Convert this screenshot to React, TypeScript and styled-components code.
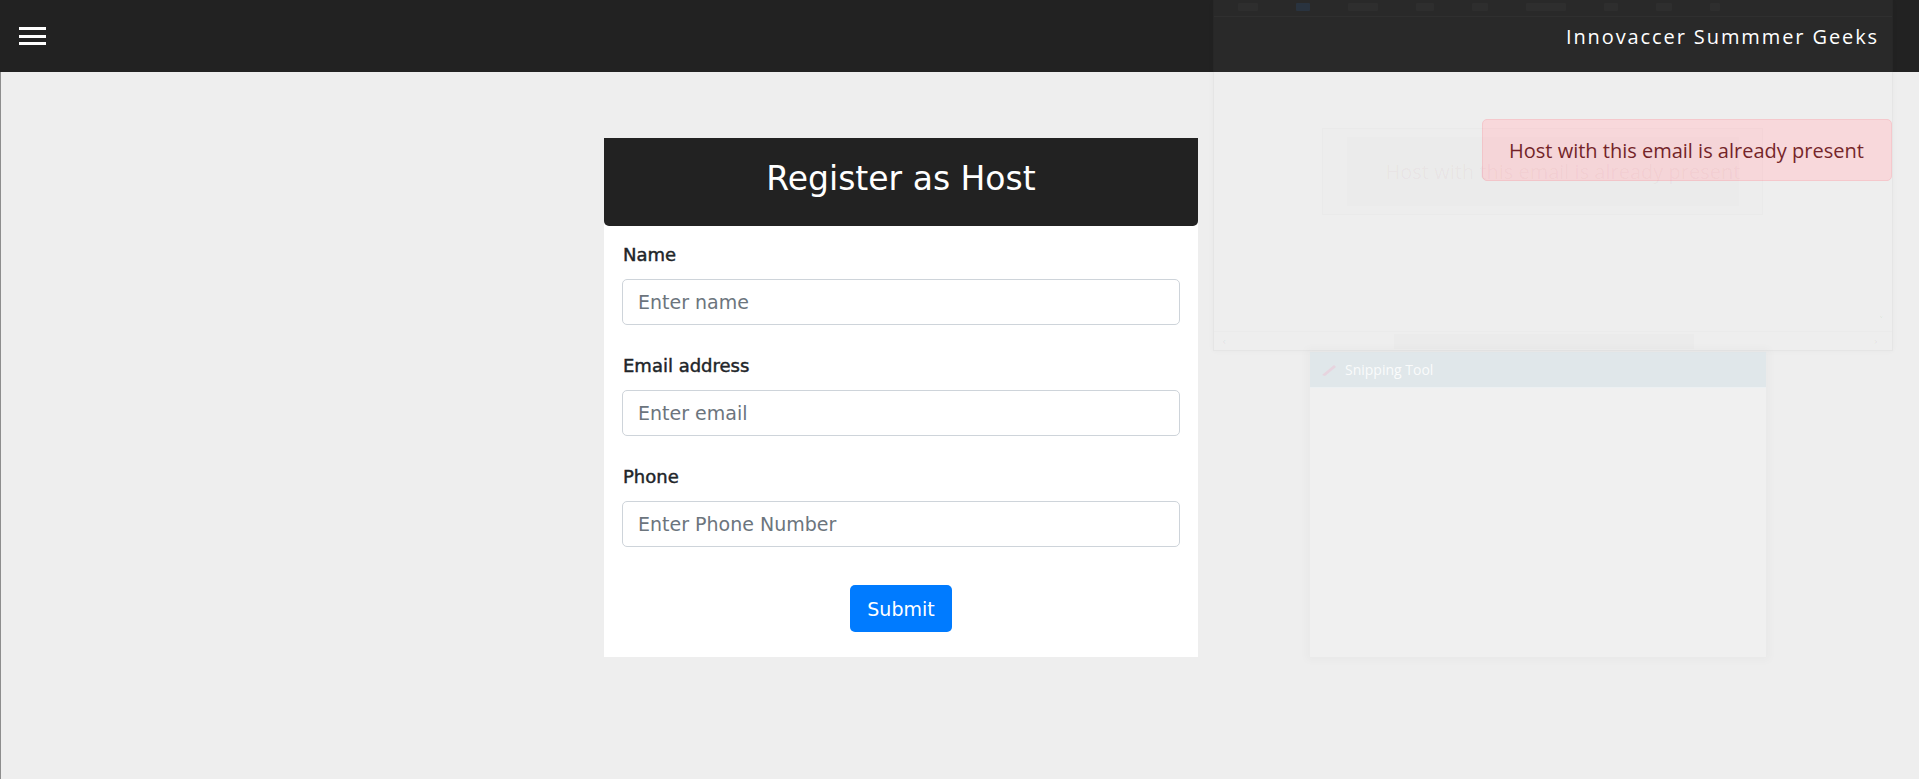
import React from "react";
import styled, { createGlobalStyle } from "styled-components";

const GlobalStyle = createGlobalStyle`
  html, body { margin: 0; padding: 0; }
  body {
    background: #eeeeee;
    font-family: "DejaVu Sans", "Noto Sans", sans-serif;
    overflow: hidden;
  }
  * { box-sizing: border-box; }
`;

const Page = styled.div`
  position: relative;
  min-height: 779px;
  display: flex;
  flex-direction: column;
`;

const NavBar = styled.header`
  height: 72px;
  flex-shrink: 0;
  background: #222222;
  display: flex;
  align-items: center;
  justify-content: space-between;
  padding: 0 40px 0 19px;
`;

const MenuButton = styled.button`
  background: none;
  border: 0;
  padding: 0;
  width: 27px;
  height: 18px;
  display: flex;
  flex-direction: column;
  justify-content: space-between;
  cursor: pointer;
`;

const MenuBar = styled.span`
  display: block;
  height: 3px;
  background: #ffffff;
`;

const Brand = styled.span`
  font-family: "Open Sans", sans-serif;
  font-size: 20px;
  letter-spacing: 1.9px;
  color: #ffffff;
`;

const Main = styled.main`
  flex: 1;
  min-height: 707px;
  border-left: 1px solid #8d8d8d;
  padding: 66px 0 0 603px;
  display: flex;
  align-items: flex-start;
`;

const Card = styled.section`
  width: 594px;
  background: #ffffff;
`;

const CardHeader = styled.h2`
  margin: 0;
  height: 88px;
  background: #222222;
  border-radius: 0 0 5px 5px;
  color: #ffffff;
  font-weight: 400;
  font-size: 33px;
  display: flex;
  align-items: center;
  justify-content: center;
  padding-bottom: 8px;
`;

const Form = styled.form`
  padding: 15px 18px 25px;
  display: flex;
  flex-direction: column;
`;

const Group = styled.div`
  display: flex;
  flex-direction: column;
  margin-bottom: 27px;
`;

const Label = styled.label`
  font-size: 18px;
  line-height: 27px;
  color: #212529;
  margin-bottom: 11px;
  padding-left: 1px;
  -webkit-text-stroke: 0.45px #212529;
`;

const Input = styled.input`
  height: 46px;
  border: 1px solid #ced4da;
  border-radius: 5px;
  padding: 0 15px;
  font-family: inherit;
  font-size: 19px;
  color: #495057;
  background: #ffffff;
  outline: none;
  &::placeholder {
    color: #6c757d;
  }
`;

const Actions = styled.div`
  display: flex;
  justify-content: center;
  margin-top: 11px;
`;

const SubmitButton = styled.button`
  height: 47px;
  padding: 0 17px;
  border: 0;
  border-radius: 5px;
  background: #007bff;
  color: #ffffff;
  font-family: inherit;
  font-size: 19px;
  cursor: pointer;
`;

const Alert = styled.div`
  position: absolute;
  left: 1482px;
  top: 119px;
  width: 410px;
  height: 62px;
  display: flex;
  align-items: center;
  padding-left: 26px;
  background: #f8d7da;
  border: 1px solid #f5c6cb;
  border-radius: 5px;
  color: #721c24;
  font-family: "Open Sans", sans-serif;
  font-size: 20px;
`;

/* faint ghost of a captured window lying over the page */
const GhostLayer = styled.div`
  position: absolute;
  inset: 0;
  pointer-events: none;
`;

const GhostWindow = styled.div`
  position: absolute;
  left: 1213px;
  top: 0;
  width: 680px;
  height: 351px;
  background: rgba(255, 255, 255, 0.035);
  border: 1px solid rgba(0, 0, 0, 0.035);
  border-top: 0;
  box-shadow: 0 0 6px rgba(0, 0, 0, 0.03);
  display: flex;
  flex-direction: column;
`;

const GhostToolbar = styled.div`
  height: 17px;
  flex-shrink: 0;
  border-bottom: 1px solid rgba(255, 255, 255, 0.03);
  display: flex;
  align-items: center;
  gap: 38px;
  padding: 0 0 3px 24px;
`;

const GhostIcon = styled.span<{ $w: number; $blue?: boolean }>`
  display: block;
  width: ${(p) => p.$w}px;
  height: 8px;
  border-radius: 1px;
  background: ${(p) =>
    p.$blue ? "rgba(40, 110, 200, 0.14)" : "rgba(255, 255, 255, 0.022)"};
`;

const GhostBody = styled.div`
  flex: 1;
  position: relative;
  display: flex;
  flex-direction: column;
`;

const GhostMessageOuter = styled.div`
  position: absolute;
  left: 108px;
  top: 111px;
  width: 441px;
  height: 87px;
  background: rgba(0, 0, 0, 0.004);
  border: 1px solid rgba(0, 0, 0, 0.01);
  display: flex;
  align-items: center;
  justify-content: center;
`;

const GhostMessageInner = styled.div`
  width: 392px;
  height: 69px;
  background: rgba(0, 0, 0, 0.007);
  display: flex;
  align-items: center;
  padding-left: 39px;
  font-family: "Open Sans", sans-serif;
  font-size: 20px;
  color: rgba(150, 40, 50, 0.045);
  white-space: nowrap;
`;

const GhostVScroll = styled.span`
  position: absolute;
  right: 8px;
  top: 297px;
  font-size: 11px;
  font-family: "DejaVu Sans", sans-serif;
  color: rgba(0, 0, 0, 0.07);
`;

const GhostScrollbar = styled.div`
  margin-top: auto;
  height: 19px;
  display: flex;
  align-items: center;
  justify-content: space-between;
  padding: 0 14px 0 8px;
  border-top: 1px solid rgba(0, 0, 0, 0.01);
  position: relative;
  font-family: "DejaVu Sans", sans-serif;
  font-size: 11px;
  color: rgba(0, 0, 0, 0.07);
`;

const GhostThumb = styled.div`
  position: absolute;
  left: 180px;
  top: 2px;
  width: 300px;
  height: 15px;
  background: rgba(0, 0, 0, 0.012);
`;

const SnipWindow = styled.div`
  position: absolute;
  left: 1310px;
  top: 352px;
  width: 456px;
  height: 305px;
  background: rgba(255, 255, 255, 0.12);
  box-shadow: 0 0 8px 4px rgba(0, 0, 0, 0.025);
  display: flex;
  flex-direction: column;
`;

const SnipTitle = styled.div`
  height: 36px;
  background: rgba(190, 212, 222, 0.3);
  display: flex;
  align-items: center;
  gap: 8px;
  padding-left: 11px;
  font-family: "Open Sans", sans-serif;
  font-size: 14px;
  color: rgba(255, 255, 255, 0.85);
  border-bottom: 1px solid rgba(255, 255, 255, 0.4);
`;

const SnipBody = styled.div`
  flex: 1;
  margin: 0 2px 2px;
  background: rgba(255, 255, 255, 0.06);
`;

const ScissorsIcon = () => (
  <svg width="16" height="14" viewBox="0 0 16 14">
    <path d="M1 12 L13 2 L15 4 L4 13 Z" fill="rgba(235, 200, 215, 0.6)" />
  </svg>
);

export default function App() {
  return (
    <Page>
      <GlobalStyle />
      <NavBar>
        <MenuButton aria-label="menu">
          <MenuBar />
          <MenuBar />
          <MenuBar />
        </MenuButton>
        <Brand>Innovaccer Summmer Geeks</Brand>
      </NavBar>
      <Main>
        <Card>
          <CardHeader>Register as Host</CardHeader>
          <Form onSubmit={(e) => e.preventDefault()}>
            <Group>
              <Label>Name</Label>
              <Input type="text" placeholder="Enter name" />
            </Group>
            <Group>
              <Label>Email address</Label>
              <Input type="email" placeholder="Enter email" />
            </Group>
            <Group>
              <Label>Phone</Label>
              <Input type="text" placeholder="Enter Phone Number" />
            </Group>
            <Actions>
              <SubmitButton type="submit">Submit</SubmitButton>
            </Actions>
          </Form>
        </Card>
      </Main>
      <Alert>Host with this email is already present</Alert>
      <GhostLayer>
        <GhostWindow>
          <GhostToolbar>
            <GhostIcon $w={20} />
            <GhostIcon $w={14} $blue />
            <GhostIcon $w={30} />
            <GhostIcon $w={18} />
            <GhostIcon $w={16} />
            <GhostIcon $w={40} />
            <GhostIcon $w={14} />
            <GhostIcon $w={16} />
            <GhostIcon $w={10} />
          </GhostToolbar>
          <GhostBody>
            <GhostMessageOuter>
              <GhostMessageInner>
                Host with this email is already present
              </GhostMessageInner>
            </GhostMessageOuter>
            <GhostVScroll>˅</GhostVScroll>
            <GhostScrollbar>
              <span>‹</span>
              <GhostThumb />
              <span>›</span>
            </GhostScrollbar>
          </GhostBody>
        </GhostWindow>
        <SnipWindow>
          <SnipTitle>
            <ScissorsIcon />
            Snipping Tool
          </SnipTitle>
          <SnipBody />
        </SnipWindow>
      </GhostLayer>
    </Page>
  );
}
